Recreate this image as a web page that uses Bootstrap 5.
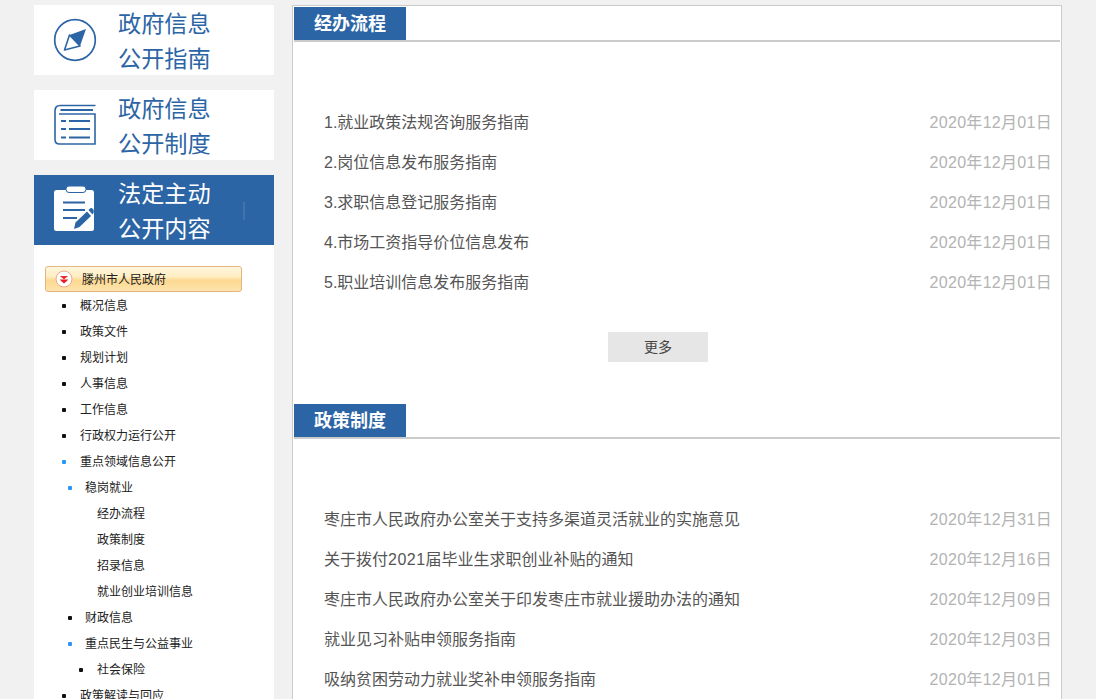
<!DOCTYPE html>
<html lang="zh-CN">
<head>
<meta charset="utf-8">
<title>经办流程</title>
<link rel="stylesheet" href="https://cdn.jsdelivr.net/npm/bootstrap@5.3.0/dist/css/bootstrap.min.css">
<style>
html,body{height:699px;overflow:hidden}
body{background:#f1f1f1;font-family:"Liberation Sans","Noto Sans CJK SC",sans-serif;color:#555}
.page-wrap{padding:5px 0 0 34px;gap:18px;width:1062px}
.side-col{width:240px;flex:none}
.side-card{height:70px;background:#fff;color:#2c65a5;margin-bottom:15px;font-size:23.2px;line-height:35px;padding-left:16px;gap:18px;position:relative}
.side-card.is-active{background:#2c65a5;color:#fff;margin-bottom:0}
.side-card svg{flex:none;display:block}
.side-label{padding-top:4px}
.side-mark{position:absolute;left:209px;top:27px;width:2px;height:18px;background:#4472ab}
.tree-box{background:#fff;padding:21px 0 0 11px;height:460px}
.tree-root{width:197px;height:26px;border:1px solid #e3b67e;border-radius:3px;background:linear-gradient(#fff6dd 0,#ffeec2 40%,#fdd992 55%,#fde3ac 100%);font-size:12px;color:#222;padding-left:9px;gap:9px}
.tree-root svg{flex:none}
.tree-root span{padding-top:2px}
.tree-item{height:26px;font-size:12px;color:#222;line-height:24px;padding-top:2px}
.tree-dot{width:4px;height:4px;border-radius:1px;background:#111;flex:none;margin-right:14px}
.tree-dot.is-open{background:#2b96f3}
.lvl-1{padding-left:17px}
.lvl-2{padding-left:23px}
.lvl-2 .tree-dot{margin-right:13px}
.lvl-3{padding-left:52px}
.lvl-3b{padding-left:34px}
.main-box{width:770px;flex:none;background:#fff;border:1px solid #ccc;padding:1px;height:700px}
.sec-head{border-bottom:2px solid #ccc;height:35px}
.sec-tab{width:112px;height:33px;background:#2c65a5;color:#fff;font-size:18px;font-weight:700;line-height:35px;text-align:center}
.sec-list{margin:60px 0 0;padding:0 8px 0 30px}
.sec-list li{height:40px;font-size:16px;color:#555;padding-top:2px}
.sec-date{color:#b3b3b3;letter-spacing:.29px}
.num-wide{letter-spacing:.5px}
.more-row{padding:30px 0 42px 314px}
.more-btn{width:100px;height:30px;background:#e6e6e6;color:#444;font-size:14px;line-height:30px;text-align:center;border:0;border-radius:0;padding:0}
.more-btn:hover{background:#e6e6e6;color:#444}
</style>
</head>
<body>
<div class="page-wrap d-flex align-items-start">
  <aside class="side-col">
    <div class="side-card d-flex align-items-center">
      <svg width="50" height="50" viewBox="0 0 50 50"><circle cx="25" cy="25" r="20.3" fill="none" stroke="#2c65a5" stroke-width="1.7"/><path d="M36 14 19.500 20 30 31Z" fill="#2c65a5"/><path d="M19.500 20 14.500 35 30 31Z" fill="none" stroke="#2c65a5" stroke-width="1.6" stroke-linejoin="round"/></svg>
      <div class="side-label">政府信息<br>公开指南</div>
    </div>
    <div class="side-card d-flex align-items-center">
      <svg width="50" height="50" viewBox="0 0 50 50" fill="none" stroke="#2c65a5"><path d="M45.500 5.500H10Q5 5.500 5 11V39.500Q5 44 9.500 44H45V14H9" stroke-width="1.6"/><path d="M10.500 10H43" stroke-width="2"/><path d="M11 21h5M19 21h21M11 29h5M19 29h21M11 37.500h5M19 37.500h21" stroke-width="1.8"/></svg>
      <div class="side-label">政府信息<br>公开制度</div>
    </div>
    <div class="side-card is-active d-flex align-items-center">
      <svg width="50" height="50" viewBox="0 0 50 50"><rect x="4" y="5" width="40" height="41" rx="2.500" fill="#fff"/><rect x="16" y="1" width="20" height="6.500" rx="3" fill="#fff" stroke="#2c65a5"/><path d="M13 17.500H35M13 25H35M13 33H27" stroke="#2c65a5" stroke-width="1.800"/><path d="M24 44 25.500 37.500 37 26.500 41 31 29.500 42Z" fill="#2c65a5"/><path d="M38.500 25 40 23.500Q41.500 22.500 43 24T43.500 28L42.500 29.500Z" fill="#2c65a5"/></svg>
      <div class="side-label">法定主动<br>公开内容</div>
      <span class="side-mark"></span>
    </div>
    <nav class="tree-box">
      <div class="tree-root d-flex align-items-center">
        <svg width="18" height="18" viewBox="0 0 18 18"><circle cx="9" cy="9" r="8" fill="#fff" stroke="#eba98a"/><path d="M5 6h8L9 9.500Z" fill="#ee2c2c"/><path d="M4.500 9.500h9L9 13.500Z" fill="#e02020"/></svg>
        <span>滕州市人民政府</span>
      </div>
      <div class="tree-item lvl-1 d-flex align-items-center"><span class="tree-dot"></span>概况信息</div>
      <div class="tree-item lvl-1 d-flex align-items-center"><span class="tree-dot"></span>政策文件</div>
      <div class="tree-item lvl-1 d-flex align-items-center"><span class="tree-dot"></span>规划计划</div>
      <div class="tree-item lvl-1 d-flex align-items-center"><span class="tree-dot"></span>人事信息</div>
      <div class="tree-item lvl-1 d-flex align-items-center"><span class="tree-dot"></span>工作信息</div>
      <div class="tree-item lvl-1 d-flex align-items-center"><span class="tree-dot"></span>行政权力运行公开</div>
      <div class="tree-item lvl-1 d-flex align-items-center"><span class="tree-dot is-open"></span>重点领域信息公开</div>
      <div class="tree-item lvl-2 d-flex align-items-center"><span class="tree-dot is-open"></span>稳岗就业</div>
      <div class="tree-item lvl-3">经办流程</div>
      <div class="tree-item lvl-3">政策制度</div>
      <div class="tree-item lvl-3">招录信息</div>
      <div class="tree-item lvl-3">就业创业培训信息</div>
      <div class="tree-item lvl-2 d-flex align-items-center"><span class="tree-dot"></span>财政信息</div>
      <div class="tree-item lvl-2 d-flex align-items-center"><span class="tree-dot is-open"></span>重点民生与公益事业</div>
      <div class="tree-item lvl-3b d-flex align-items-center"><span class="tree-dot"></span>社会保险</div>
      <div class="tree-item lvl-1 d-flex align-items-center"><span class="tree-dot"></span>政策解读与回应</div>
    </nav>
  </aside>
  <main class="main-box">
    <section>
      <div class="sec-head"><div class="sec-tab">经办流程</div></div>
      <ul class="sec-list list-unstyled">
        <li class="d-flex justify-content-between align-items-center"><span>1.就业政策法规咨询服务指南</span><span class="sec-date">2020年12月01日</span></li>
        <li class="d-flex justify-content-between align-items-center"><span>2.岗位信息发布服务指南</span><span class="sec-date">2020年12月01日</span></li>
        <li class="d-flex justify-content-between align-items-center"><span>3.求职信息登记服务指南</span><span class="sec-date">2020年12月01日</span></li>
        <li class="d-flex justify-content-between align-items-center"><span>4.市场工资指导价位信息发布</span><span class="sec-date">2020年12月01日</span></li>
        <li class="d-flex justify-content-between align-items-center"><span>5.职业培训信息发布服务指南</span><span class="sec-date">2020年12月01日</span></li>
      </ul>
      <div class="more-row"><button type="button" class="btn more-btn">更多</button></div>
    </section>
    <section>
      <div class="sec-head"><div class="sec-tab">政策制度</div></div>
      <ul class="sec-list list-unstyled">
        <li class="d-flex justify-content-between align-items-center"><span>枣庄市人民政府办公室关于支持多渠道灵活就业的实施意见</span><span class="sec-date">2020年12月31日</span></li>
        <li class="d-flex justify-content-between align-items-center"><span>关于拨付<span class="num-wide">2021</span>届毕业生求职创业补贴的通知</span><span class="sec-date">2020年12月16日</span></li>
        <li class="d-flex justify-content-between align-items-center"><span>枣庄市人民政府办公室关于印发枣庄市就业援助办法的通知</span><span class="sec-date">2020年12月09日</span></li>
        <li class="d-flex justify-content-between align-items-center"><span>就业见习补贴申领服务指南</span><span class="sec-date">2020年12月03日</span></li>
        <li class="d-flex justify-content-between align-items-center"><span>吸纳贫困劳动力就业奖补申领服务指南</span><span class="sec-date">2020年12月01日</span></li>
      </ul>
    </section>
  </main>
</div>
<script src="https://cdn.jsdelivr.net/npm/bootstrap@5.3.0/dist/js/bootstrap.bundle.min.js"></script>
</body>
</html>
